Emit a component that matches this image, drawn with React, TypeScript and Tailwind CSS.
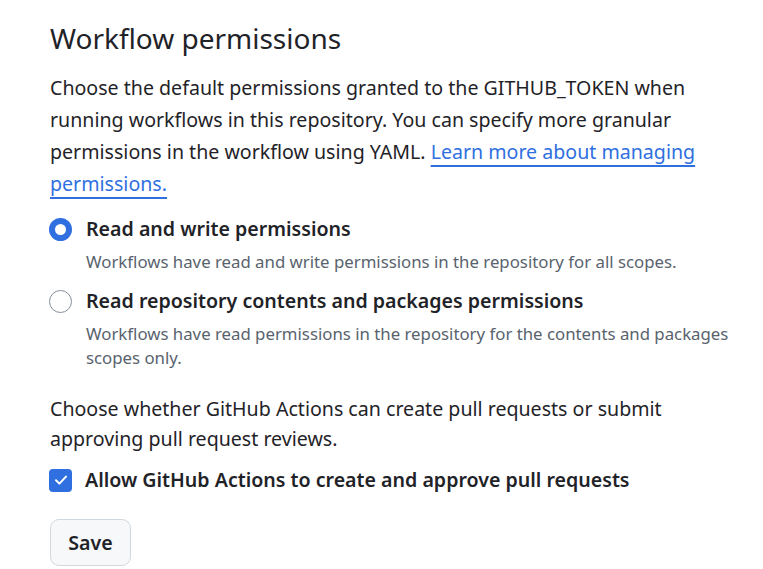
const font = { fontFamily: '"Noto Sans", "Open Sans", sans-serif' };

function Radio({ checked }: { checked?: boolean }) {
  return checked ? (
    <span className="-ml-px mt-[5px] h-[23px] w-[23px] shrink-0 rounded-full border-[6px] border-[#2f6fdf] bg-white" />
  ) : (
    <span className="-ml-px mt-[5px] h-[23px] w-[23px] shrink-0 rounded-full border-[1.5px] border-[#858e99] bg-white" />
  );
}

function Option({
  checked,
  title,
  desc,
}: {
  checked?: boolean;
  title: string;
  desc: string;
}) {
  return (
    <div className="flex gap-[14px]">
      <Radio checked={checked} />
      <div>
        <div className="text-[19.6px] font-semibold leading-[32px] text-[#1f2328]">{title}</div>
        <p className="mt-[5px] text-[16.8px] leading-[24px] text-[#59636e]">{desc}</p>
      </div>
    </div>
  );
}

export default function App() {
  return (
    <div style={font} className="bg-white pl-[50px] pr-[18px] pt-[17px] text-[#1f2328]">
      <h2 className="text-[28px] font-normal leading-[42px]">Workflow permissions</h2>
      <p className="mt-[13px] text-[19.6px] leading-[32px]">
        Choose the default permissions granted to the GITHUB_TOKEN when running workflows in this
        repository. You can specify more granular permissions in the workflow using YAML.{" "}
        <a href="#" className="text-[#2f6fdf] underline decoration-[1.5px] underline-offset-[6px]">
          Learn more about managing permissions.
        </a>
      </p>

      <div className="mt-[13px] flex flex-col gap-[11px]">
        <Option
          checked
          title="Read and write permissions"
          desc="Workflows have read and write permissions in the repository for all scopes."
        />
        <Option
          title="Read repository contents and packages permissions"
          desc="Workflows have read permissions in the repository for the contents and packages scopes only."
        />
      </div>

      <p className="mt-[24px] text-[19.6px] leading-[30px]">
        Choose whether GitHub Actions can create pull requests or submit approving pull request
        reviews.
      </p>

      <label className="mt-[10px] flex items-center gap-[13px]">
        <span className="-ml-px flex h-[23px] w-[23px] shrink-0 items-center justify-center rounded-[4px] bg-[#2f6fdf]">
          <svg width="16" height="16" viewBox="0 0 16 16" fill="none">
            <path d="M3 8.3 6.4 11.6 13 4.6" stroke="white" strokeWidth="2" strokeLinecap="round" strokeLinejoin="round" />
          </svg>
        </span>
        <span className="text-[19.6px] font-semibold leading-[32px]">
          Allow GitHub Actions to create and approve pull requests
        </span>
      </label>

      <button className="mt-[23px] h-[47px] w-[81px] rounded-[9px] border border-[#d1d9e0] bg-[#f6f8fa] text-[19.6px] font-semibold text-[#1f2328]">
        Save
      </button>
    </div>
  );
}
